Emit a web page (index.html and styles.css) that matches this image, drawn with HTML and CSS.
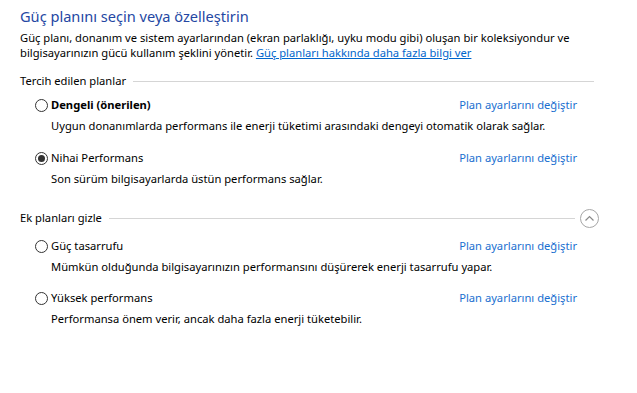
FILE: index.html
```html
<!DOCTYPE html>
<html lang="tr">
<head>
<meta charset="utf-8">
<title>Güç seçenekleri</title>
<link rel="stylesheet" href="styles.css">
</head>
<body>
<div class="page">
  <h1 class="title">Güç planını seçin veya özelleştirin</h1>
  <p class="intro">Güç planı, donanım ve sistem ayarlarından (ekran parlaklığı, uyku modu gibi) oluşan bir koleksiyondur ve bilgisayarınızın gücü kullanım şeklini yönetir. <a class="link" href="#">Güç planları hakkında daha fazla bilgi ver</a></p>

  <div class="group-head first">
    <span class="group-label">Tercih edilen planlar</span>
    <span class="group-line"></span>
  </div>
  <div class="plans">
    <div class="plan p1">
      <div class="plan-top">
        <span class="radio"></span>
        <span class="plan-name bold">Dengeli (önerilen)</span>
        <a class="plan-link" href="#">Plan ayarlarını değiştir</a>
      </div>
      <div class="plan-desc">Uygun donanımlarda performans ile enerji tüketimi arasındaki dengeyi otomatik olarak sağlar.</div>
    </div>
    <div class="plan p2">
      <div class="plan-top">
        <span class="radio checked"></span>
        <span class="plan-name">Nihai Performans</span>
        <a class="plan-link" href="#">Plan ayarlarını değiştir</a>
      </div>
      <div class="plan-desc">Son sürüm bilgisayarlarda üstün performans sağlar.</div>
    </div>
  </div>

  <div class="group-head second">
    <span class="group-label">Ek planları gizle</span>
    <span class="group-line"></span>
    <span class="collapse-btn">
      <svg width="19" height="19" viewBox="0 0 19 19"><circle cx="9.5" cy="9.5" r="9" fill="#fff" stroke="#a6a6a6" stroke-width="1"/><path d="M5.5 11.5 L9.5 7.5 L13.5 11.5" fill="none" stroke="#8a8a8a" stroke-width="1.2"/></svg>
    </span>
  </div>
  <div class="plans">
    <div class="plan p3">
      <div class="plan-top">
        <span class="radio"></span>
        <span class="plan-name">Güç tasarrufu</span>
        <a class="plan-link" href="#">Plan ayarlarını değiştir</a>
      </div>
      <div class="plan-desc">Mümkün olduğunda bilgisayarınızın performansını düşürerek enerji tasarrufu yapar.</div>
    </div>
    <div class="plan p4">
      <div class="plan-top">
        <span class="radio"></span>
        <span class="plan-name">Yüksek performans</span>
        <a class="plan-link" href="#">Plan ayarlarını değiştir</a>
      </div>
      <div class="plan-desc">Performansa önem verir, ancak daha fazla enerji tüketebilir.</div>
    </div>
  </div>
</div>
</body>
</html>
```
FILE: styles.css
```css
html, body {
  margin: 0;
  padding: 0;
  background: #ffffff;
}
body {
  font-family: "Noto Sans", "Open Sans", sans-serif;
  font-size: 11.2px;
  color: #000;
}
.page {
  padding: 5px 43px 0 20px;
}
.title {
  margin: 0;
  font-size: 14.6px;
  font-weight: normal;
  line-height: 22px;
  color: #2447a3;
}
.intro {
  margin: 3px 0 0 0;
  line-height: 15px;
}
.link {
  color: #0066cc;
  text-decoration: underline;
}
.group-head {
  display: flex;
  align-items: center;
  line-height: 16px;
}
.group-head.first {
  margin-top: 13px;
  height: 16px;
}
.group-head.second {
  margin-top: 21px;
  height: 20px;
  margin-right: -5px;
}
.group-label {
  flex: none;
}
.group-line {
  flex: 1;
  height: 1px;
  background: #d5d5d5;
  margin-left: 7px;
}
.collapse-btn {
  flex: none;
  display: flex;
  margin-left: 5px;
}
.plans {
  padding-left: 15px;
  padding-right: 17px;
}
.plan-top {
  display: flex;
  align-items: center;
  height: 16px;
  line-height: 16px;
}
.radio {
  flex: none;
  width: 11px;
  height: 11px;
  border: 1px solid #333;
  border-radius: 50%;
  background: #fff;
  margin-right: 3px;
  display: flex;
  align-items: center;
  justify-content: center;
}
.radio.checked::after {
  content: "";
  width: 7px;
  height: 7px;
  border-radius: 50%;
  background: #333;
}
.plan-name {
  flex: 1;
}
.bold {
  font-weight: bold;
}
.plan-link {
  color: #1a6fd0;
  text-decoration: none;
}
.plan-desc {
  padding-left: 16px;
  line-height: 16px;
  margin-top: 5px;
}
.p1 { margin-top: 8px; }
.p2 { margin-top: 16px; }
.p3 { margin-top: 10px; }
.p4 { margin-top: 15px; }
```
